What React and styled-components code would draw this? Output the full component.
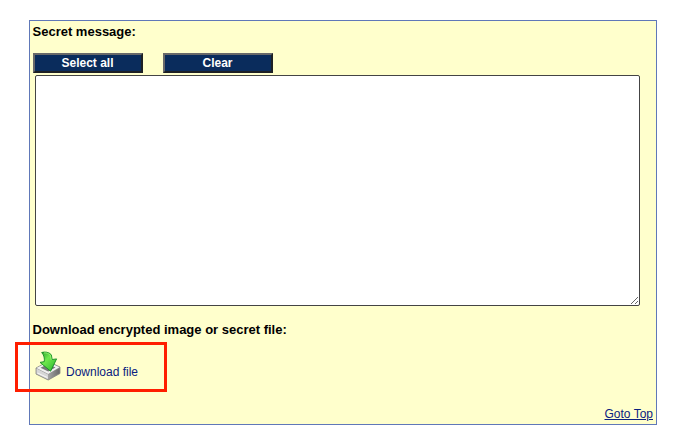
import React from "react";
import styled, { createGlobalStyle } from "styled-components";

const GlobalStyle = createGlobalStyle`
  * { box-sizing: border-box; }
  body {
    margin: 0;
    background: #fff;
    font-family: "Liberation Sans", Arial, sans-serif;
    overflow: hidden;
  }
`;

const Page = styled.main`
  height: 441px;
  padding: 20px 31px 16px 29px;
`;

const Panel = styled.section`
  display: flex;
  flex-direction: column;
  height: 405px;
  padding: 3px;
  background: #ffffcc;
  border: 1px solid #6078b8;
`;

const Heading = styled.h2`
  margin: 0 0 0 -0.5px;
  height: 16px;
  font-size: 13px;
  font-weight: bold;
  line-height: 16px;
  color: #000;
  white-space: nowrap;
`;

const ButtonRow = styled.div`
  display: flex;
  gap: 20px;
  margin-top: 13px;
`;

const ActionButton = styled.button`
  width: 110px;
  height: 20px;
  padding: 0 1px 0 0;
  border: 2px solid;
  border-color: #68696a #1d2024 #1d2024 #68696a;
  background: #0a2c5c;
  color: #fff;
  font: bold 12px/16px "Liberation Sans", Arial, sans-serif;
  text-align: center;
`;

const MessageBox = styled.textarea`
  display: block;
  flex: none;
  width: 605px;
  height: 231px;
  margin: 2px 0 16px 2px;
  border: 1px solid #444;
  border-radius: 2px;
  background: #fff;
  resize: both;
  outline: none;
`;

const DownloadLink = styled.a`
  position: relative;
  display: flex;
  align-items: flex-start;
  width: 130px;
  height: 40px;
  margin-top: 10px;
  padding-left: 2px;
  color: #0a2080;
  font-size: 12px;
  line-height: 14px;
  text-decoration: none;
`;

const LinkLabel = styled.span`
  margin: 17px 0 0 5px;
  white-space: nowrap;
`;

const Highlight = styled.span`
  position: absolute;
  left: -18.5px;
  top: -6px;
  width: 152px;
  height: 50px;
  border: 3px solid #ff1e00;
  pointer-events: none;
`;

const TopLink = styled.a`
  align-self: flex-end;
  margin-top: auto;
  color: #0a2080;
  font-size: 12px;
  line-height: 14px;
  text-decoration: underline;
`;

const IconGraphic = styled.svg`
  display: block;
  flex: none;
  width: 26px;
  height: 32px;
  margin-top: 3px;
`;

const DownloadIcon = () => (
  <IconGraphic viewBox="0 0 26 32" aria-hidden="true">
    <defs>
      <linearGradient id="arrow" x1="0" y1="0" x2="1" y2="1">
        <stop offset="0" stopColor="#249a28" />
        <stop offset="0.4" stopColor="#70e84d" />
        <stop offset="1" stopColor="#28b52b" />
      </linearGradient>
      <linearGradient id="front" x1="0" y1="0" x2="1" y2="0">
        <stop offset="0" stopColor="#a5a5a5" />
        <stop offset="1" stopColor="#696969" />
      </linearGradient>
    </defs>
    <g transform="translate(0 -1)">
      <path d="M1 18 13 11.5l12 5.5v6.5L13.2 30 1 24z" fill="#929292" stroke="#777" strokeWidth=".7" />
      <path d="M1.5 18 13 12l11.5 5.2-11.3 6.8z" fill="#f1f1f1" />
      <path d="M5.5 17.8 13 14l7.5 3.4-7.3 4.2z" fill="#777" />
      <path d="M1.5 18.5v5.2l11.7 5.7v-5z" fill="#d7d7d7" />
      <path d="m13.2 24.4 11.3-6.5v5.4l-11.3 6.1z" fill="url(#front)" />
      <path d="m2.5 22.4 9.8 4.7v1l-9.8-4.6z" fill="#f8f8f8" />
    </g>
    <path
      d="M6.7 1.5c3.2-1 7.4-.4 9.6 2.3l.9 4.7 4.4-.6-6 12.3L5 11.4l4.3-.8c.3-3.3-.1-6.1-2.6-9.1z"
      fill="url(#arrow)"
      stroke="#168b25"
      strokeWidth=".9"
      strokeLinejoin="round"
    />
    <path d="M9 1.9c2.7-.2 4.8.6 6.3 2.3l.9 4.8" fill="none" stroke="#9cf477" strokeWidth=".8" />
  </IconGraphic>
);

export default function App() {
  return (
    <>
      <GlobalStyle />
      <Page>
        <Panel>
          <Heading>Secret message:</Heading>
          <ButtonRow>
            <ActionButton type="button">Select all</ActionButton>
            <ActionButton type="button">Clear</ActionButton>
          </ButtonRow>
          <MessageBox aria-label="Secret message" />
          <Heading>Download encrypted image or secret file:</Heading>
          <DownloadLink href="#download">
            <DownloadIcon />
            <LinkLabel>Download file</LinkLabel>
            <Highlight />
          </DownloadLink>
          <TopLink href="#top">Goto Top</TopLink>
        </Panel>
      </Page>
    </>
  );
}
